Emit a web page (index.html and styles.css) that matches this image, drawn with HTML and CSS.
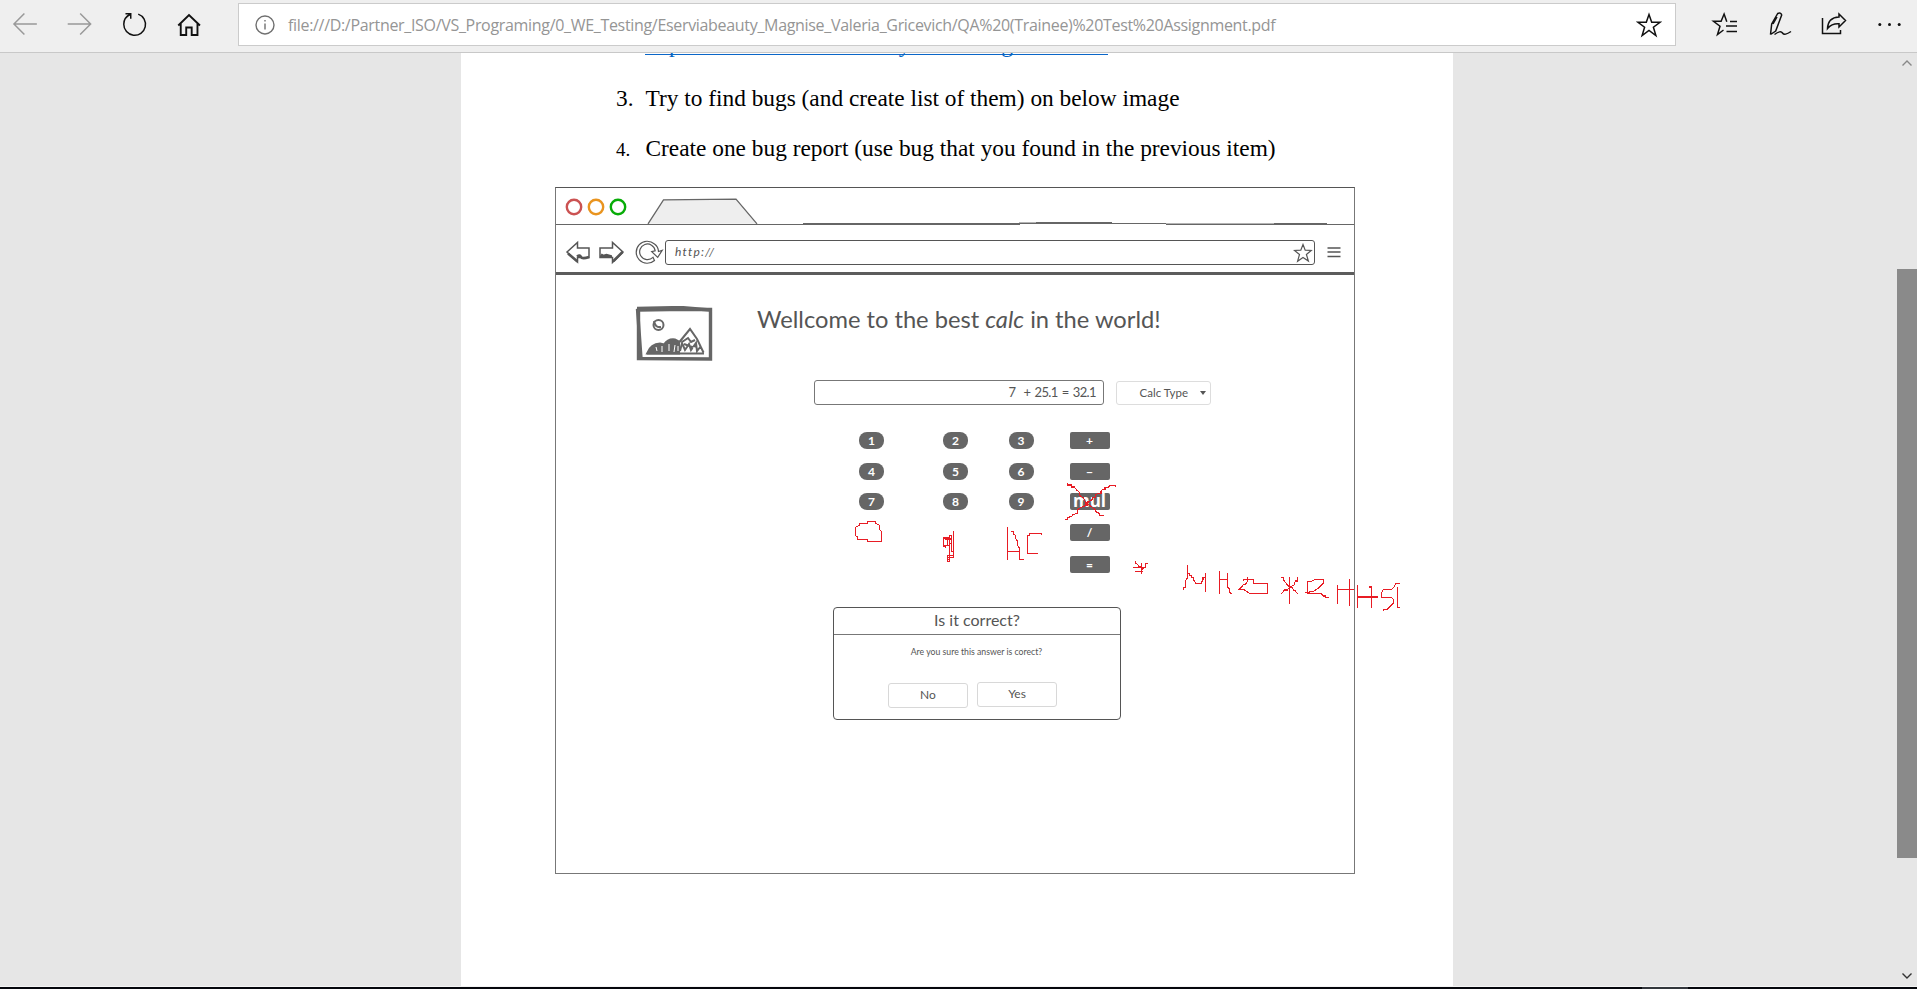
FILE: index.html
```html
<!DOCTYPE html>
<html lang="en">
<head>
<meta charset="utf-8">
<title>QA (Trainee) Test Assignment.pdf</title>
<link rel="stylesheet" href="styles.css">
</head>
<body>
<header class="chrome">
  <svg class="nav-icons" viewBox="0 0 239 52">
    <g class="dim"><path d="M37 24H14M24.500 13.500L14 24l10.500 10.500"/><path d="M68 24H91M80.500 13.500L91 24l-10.500 10.500"/></g>
    <path d="M126 13.800h5.300v5M131.100 14.200C127 16 124.300 19.600 124.300 24.300a10.900 10.900 0 1 0 14.500-10.200" />
    <path d="M179 25.500L189.800 15l11 10.500M181.500 23.500V35h5.500v-7.500h5.500V35h5.800V23.500" class="heavy"/>
  </svg>
  <div class="address">
    <svg class="info" viewBox="0 0 20 20"><circle cx="10" cy="10" r="9"/><path d="M10 8.500v6M10 5v1.600"/></svg>
    <span class="url">file:///D:/Partner_ISO/VS_Programing/0_WE_Testing/Eserviabeauty_Magnise_Valeria_Gricevich/QA%20(Trainee)%20Test%20Assignment.pdf</span>
    <svg class="star" viewBox="0 0 26 26"><path d="M13 2.500l2.700 7.800h8.300l-6.600 4.900 2.500 8.300-6.900-5-6.900 5 2.500-8.300L2 10.300h8.300z"/></svg>
  </div>
  <svg class="tools" viewBox="1676 0 241 52">
    <path d="M1726 26H1737M1726.500 31.500H1737M1730 21.500H1737M1723.500 30l-6 4.500 2.500-8.300-6.500-4.900h7.600l3-7.300 2.700 7.800" />
    <path d="M1770.500 34.500l1.200-10.500 6-10.500q3-1.500 4 1.500l-6 16-5.200 3.500M1773 24l4-7M1774.500 34.500q6-4.500 8-1.500t8.500-1.500"/>
    <path d="M1822.500 18v15.500h18v-3.500M1827.500 28.500q.5-11 11.500-11.500v-3l6.500 6.500-6.500 6.500v-3.200q-7-.5-11.500 4.700z"/>
    <g class="dots"><circle cx="1879.800" cy="24.500" r="1.500"/><circle cx="1889.500" cy="24.500" r="1.500"/><circle cx="1899.200" cy="24.500" r="1.500"/></g>
  </svg>
</header>

<main class="viewer">
  <article class="sheet">
    <a class="link"><span class="lp">p</span><span class="ly">y</span><span class="lg">g</span></a>
    <p class="item"><span class="num">3.</span><span class="t3">Try to find bugs (and create list of them) on below image</span></p>
    <p class="item second"><span class="num small">4.</span><span class="t4">Create one bug report (use bug that you found in the previous item)</span></p>

    <section class="mock">
      <div class="tabs">
        <svg viewBox="556 188 798 37">
          <circle cx="574" cy="207" r="7.200" stroke="#cb5252"/><circle cx="596" cy="207" r="7.200" stroke="#e9941f"/><circle cx="618" cy="207" r="7.200" stroke="#07ac07"/>
          <path class="tab" d="M648 223.800L663.500 199.800L736 199.200L757 223.800"/>
          <path class="edge" d="M556 224.500H1020M803 223.500H1112M1019 223H1036M1036 222.500H1112M1112 223.500H1166M1166 224H1274M1274 223.500H1327M1166 224.500H1354"/>
        </svg>
      </div>
      <div class="bar">
        <svg class="arrows" viewBox="556 225 109 48">
          <path d="M567 252l10.500-9.500v5.500h11.500v9.500h-11.500v4.500z"/><path class="shade" d="M568 253.500l9.500 8M577 256.500q3-2 4 .5t8 0"/>
          <path d="M623 252l-10.500-9.500v5.500h-12.500v9.500h12.500v5z"/><path class="shade" d="M600 256.800h12M601 254.500l2.500 1.500 3-1 5 1.500M613.500 261l9-9"/>
          <path class="thin" d="M658.500 251.500a9.800 9.800 0 0 0-4-7.500 11 11 0 1 0 0 16.500l-1.500-3.200a7.800 7.800 0 1 1 2.200-6.500l-3.500.8 6 5.800 4.500-7z"/>
        </svg>
        <div class="field"><span>http://</span>
          <svg viewBox="0 0 20 20"><path d="M10 1.500l2.200 5.700 6 .3-4.800 4 2 6.600-5.400-3.600-5.400 3.700 1.900-6.700-5-4 6.300-.3z"/></svg>
        </div>
        <svg class="burger" viewBox="0 0 14 12"><path d="M.5 2h13M.5 6h13M.5 10.500h13"/></svg>
      </div>
      <div class="canvas">
        <div class="hero">
          <svg class="pic" viewBox="635 305 78 56">
            <path class="frame" d="M638.500 309l31-.5h41v49.500l-72-.5z"/>
            <path class="frame" d="M637.500 308L641 357.500M637 307.500l44-1 29 2.500"/>
            <circle cx="658.500" cy="324" r="5"/><path d="M654 320q1 7 7 6"/>
            <path class="hill" d="M647 352.500q4-10 13-10l4 1q4-6 11-5l4 2v12z"/>
            <path d="M647 352.500h57M677 344l13-16 7 10 6.500 13.500M682 341l6-4 3 4 4-2M680 350l2-8 3 7 4-6 2 6 5-7 1 8 4-5M684 343l8 3 5-1"/>
            <path class="cut" d="M657 350l-1-4M662 351v-6M669 350v-7M674 351l1-7M678 350v-5M694 350v-4"/>
          </svg>
          <h1>Wellcome to the best <em>calc</em> in the world!</h1>
        </div>
        <div class="readout">
          <div class="display"><span class="seven">7</span><span>+</span><span class="n">25.1</span><span>=</span><span class="n last">32.1</span></div>
          <div class="select"><span>Calc Type</span><i></i></div>
        </div>
        <div class="keys">
          <b>1</b><b>2</b><b>3</b><b class="op">+</b>
          <b>4</b><b>5</b><b>6</b><b class="op">−</b>
          <b>7</b><b>8</b><b>9</b><b class="op mul">mul</b>
          <b class="op c4">/</b>
          <b class="op c4">=</b>
        </div>
        <div class="dialog">
          <h2>Is it correct?</h2>
          <p>Are you sure this answer is corect?</p>
          <div class="choices"><span>No</span><span class="yes">Yes</span></div>
        </div>
      </div>
    </section>
  </article>
  <aside class="scroll">
    <svg viewBox="0 0 20 12"><path d="M5.500 8.500L10 4l4.500 4.500"/></svg>
    <div class="thumb"></div>
    <svg class="down" viewBox="0 0 20 12"><path d="M5.500 3.500L10 8l4.500-4.500"/></svg>
  </aside>
</main>
<footer class="taskbar"><i></i></footer>

<svg class="ink" viewBox="840 470 580 150">
  <g transform="translate(840 470) scale(.33333)">
    <path d="M46 173v23l7 6v6h29v6h43v-30l-6-5v-13l-12-6v-6h-25v6h-24v6l-7 3z"/>
    <path d="M340 183v79h-18v12h6v-78h7v48h5M334 196v10h-24v24h7v3M310 202h18v24h-18M316 208h18v12M322 202v24M334 220h-6M322 274v-18h18M322 268h6M334 220v24"/>
    <path d="M502 171v98M513 184h6l2 8 6 4v10l5 6v14l6 8v34h13M502 244h36M605 196v-6h-37v6h-6v55h31"/>
    <path d="M682 39V45H694V51H703L709 59L718 67V76L730 84L736 95L744 103L757 112L766 119L769 127L778 130V136H791"/>
    <path d="M827 52V46H809V50L803 52H795V58H787L783 64V70H773L766 76V82H757V88L748 94L736 107L724 112L712 119V130L699 134L694 140L682 142V148H676M736 95v12h6v-12h7"/>
  </g>
  <g transform="translate(1050 470) scale(.33333)">
    <path d="M256 273v6l7 4 3 7h8M250 292h38M254 304h26M274 279v32M293 280h-6v10l-6 3-7 11"/>
    <path d="M400 360v-8h6v-20l6-8v-39M412 304v6h6v6h7v6l6 2v6l6 10h16l6-10v-8h7v-13M466 310v56"/>
    <path d="M508 303v69M508 328h25M532 309v43l6 4v9l7 7"/>
    <path d="M580 334V328H592M592 322v6h18v12h43v30h-55l-18-12h-12l6-6 6-8h6l6-9v-7"/>
    <path d="M694 322h6v6l6 9 6 7 6 7h8l4 9 6 3 7 9M743 321v12h-6l-4 6v6l-13 6-8 9h-8l-10 11M718 322v80"/>
    <path d="M772 371V334H784L796 328H820V340L808 352L796 360L790 365H778V368H767V365M772 371H814L820 378H826V382H838"/>
    <path d="M862 345v57M862 358h50M898 327v80M922 345v69M922 381h62M964 413v-62h-6"/>
    <path d="M1049 340h-11l-6 12-8 6h-24l-6 12v12h30l6 6v12l-8 8-10 10h-12v6M1043 351v61h6"/>
  </g>
</svg>
</body>
</html>
```
FILE: styles.css
```css
* { box-sizing: border-box; }
body { margin: 0; width: 1917px; height: 989px; overflow: hidden; display: flex; flex-direction: column; background: #e6e6e6; }
svg { display: block; flex: none; fill: none; }
h1, h2, p { margin: 0; font-weight: 400; }

.chrome { height: 53px; flex: none; display: flex; background: #efefef; border-bottom: 1px solid #c8c8c8; }
.nav-icons { width: 238px; height: 52px; stroke: #111; stroke-width: 1.5; }
.nav-icons .dim { stroke: #999; }
.nav-icons .heavy { stroke-width: 1.9; }
.address { width: 1438px; height: 43px; margin-top: 3px; border: 1px solid #cbcbcb; background: #fff; display: flex; align-items: center; padding: 0 13px 0 16px; }
.info { width: 20px; height: 20px; margin-top: 1px; stroke: #707070; stroke-width: 1.4; }
.url { margin-left: 13px; flex: 1; font: 16px "Open Sans", sans-serif; color: #959595; white-space: nowrap; letter-spacing: -.32px; padding-top: 1px; }
.star { width: 26px; height: 26px; stroke: #111; stroke-width: 1.5; }
.tools { width: 241px; height: 52px; stroke: #111; stroke-width: 1.5; }
.dots { fill: #111; stroke: none; }

.viewer { height: 933px; display: flex; padding-left: 461px; justify-content: space-between; }
.sheet { width: 992px; background: #fff; font-family: "Liberation Serif", serif; font-size: 23.35px; color: #000; }
.link { display: flex; height: 5px; margin-left: 184px; width: 463px; overflow: hidden; color: #0563c1; background: linear-gradient(#0a66c8, #0a66c8) 0 1px / 100% 1px no-repeat; line-height: 27px; }
.link span { margin-top: -22px; height: 27px; }
.lp { margin-left: 24px; }
.ly { margin-left: 218px; }
.lg { margin-left: 91px; }
.item { display: flex; align-items: baseline; padding-left: 155px; margin-top: 26px; line-height: 28px; white-space: nowrap; }
.item.second { margin-top: 22px; }
.num { width: 29.500px; }
.num.small { font-size: 19px; }

.mock { width: 800px; height: 687px; margin: 23px 0 0 94px; border: 1px solid #777; border-top-color: #555; font-family: Lato, sans-serif; color: #555; }
.tabs { height: 37px; }
.tabs svg { width: 798px; height: 37px; stroke-width: 2.4; }
.tabs .tab { fill: #eee; stroke: #666; stroke-width: 1.3; }
.tabs .edge { stroke: #666; stroke-width: 1; }
.bar { height: 50px; display: flex; align-items: flex-start; border-bottom: 3px solid #5c5c5c; }
.arrows { width: 109px; height: 48px; stroke: #555; stroke-width: 1.5; }
.arrows .shade { stroke-width: 2.6; }
.arrows .thin { stroke-width: 1.2; }
.field { width: 650px; height: 25px; margin-top: 15px; border: 1px solid #555; border-radius: 3px; display: flex; justify-content: space-between; padding: 0 1px 0 9px; font: italic 12px/21px Lato, sans-serif; letter-spacing: 1.2px; }
.field svg { width: 20px; height: 20px; margin-top: 2px; stroke: #555; stroke-width: 1.2; }
.burger { width: 14px; height: 12px; margin: 21px 0 0 12px; stroke: #555; stroke-width: 1.5; }
.canvas { padding-left: 79px; }
.hero { display: flex; padding-top: 30px; }
.pic { width: 78px; height: 56px; position: relative; top: 1px; stroke: #666; stroke-width: 2; }
.pic .frame { stroke-width: 3.4; }
.pic .hill { fill: #666; }
.pic .cut { stroke: #fff; stroke-width: 1; }
.hero h1 { margin-left: 44px; font-size: 23.700px; line-height: 28px; white-space: nowrap; }
.readout { display: flex; margin: 19px 0 0 179px; }
.display { width: 290px; height: 25px; border: 1px solid #777; border-radius: 3px; display: flex; justify-content: flex-end; line-height: 22px; padding-right: 7px; }
.display span { font-size: 13px; letter-spacing: -.6px; }
.display .seven { margin-right: 8px; }
.display .n { margin: 0 4px; }
.display .last { margin-right: 0; }
.select { width: 95px; height: 24px; margin: 1px 0 0 12px; border: 1px solid #ddd; border-radius: 3px; display: flex; align-items: center; justify-content: flex-end; font-size: 11.500px; line-height: 20px; padding: 0 4px 1px 0; }
.select i { margin-left: 12px; border: 3px solid transparent; border-top: 4px solid #555; border-bottom: 0; }
.keys { display: grid; grid-template-columns: 84px 65.500px 57px 50px; grid-template-rows: 31px 30px 31px 32px 17px; margin: 27px 0 0 224px; }
.keys b { width: 25px; height: 17px; border-radius: 8px; background: #666; color: #fff; font-size: 12px; line-height: 17px; text-align: center; }
.keys .op { width: 40px; border-radius: 2px; margin-left: 4px; }
.keys .mul { font: bold 17px/15px "Open Sans", sans-serif; }
.keys .c4 { grid-column: 4; }
.dialog { width: 288px; height: 113px; margin: 34px 0 0 198px; border: 1px solid #555; border-radius: 4px; text-align: center; }
.dialog h2 { height: 27px; border-bottom: 1px solid #777; font-size: 16px; line-height: 23px; }
.dialog p { font-size: 8.700px; line-height: 12px; margin-top: 11px; padding-right: 1px; }
.choices { display: flex; gap: 9px; margin: 25px 0 0 54px; }
.choices span { width: 80px; height: 25px; border: 1px solid #d8d8d8; border-radius: 3px; font-size: 12px; line-height: 21px; }
.choices .yes { margin-top: -1px; }

.scroll { width: 20px; display: flex; flex-direction: column; padding-top: 4px; }
.scroll svg { width: 20px; height: 12px; stroke: #888; stroke-width: 1.4; }
.thumb { height: 589px; margin-top: 200px; background: #8a8a8a; }
.scroll .down { margin-top: 112px; stroke: #333; }
.taskbar { height: 3px; background: #05070c; border-top: 1px solid #f4f4f4; padding-left: 1642px; }
.taskbar i { display: block; width: 46px; height: 2px; background: #33373c; }

.ink { position: absolute; left: 840px; top: 470px; width: 580px; height: 150px; stroke: #e81c24; stroke-width: 3.2; shape-rendering: crispEdges; }
```
